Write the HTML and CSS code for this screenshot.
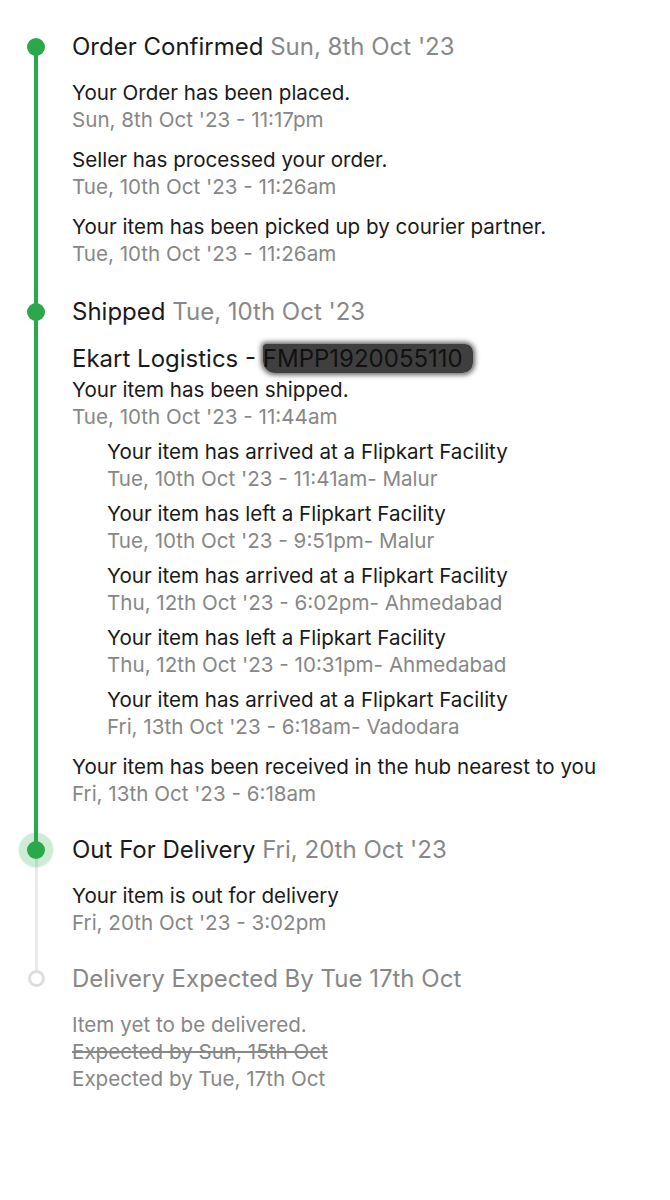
FILE: index.html
```html
<!DOCTYPE html>
<html lang="en">
<head>
<meta charset="UTF-8">
<meta name="viewport" content="width=device-width, initial-scale=1.0">
<title>Order Tracking</title>
<link rel="stylesheet" href="styles.css">
</head>
<body>
<div class="timeline">

<div class="step done">
<div class="rail"><span class="dot"></span></div>
<div class="content">
<div class="heading">Order Confirmed <span class="when">Sun, 8th Oct '23</span></div>
<div class="events">
<div class="event"><div class="msg">Your Order has been placed.</div><div class="time">Sun, 8th Oct '23 - 11:17pm</div></div>
<div class="event"><div class="msg">Seller has processed your order.</div><div class="time">Tue, 10th Oct '23 - 11:26am</div></div>
<div class="event"><div class="msg">Your item has been picked up by courier partner.</div><div class="time">Tue, 10th Oct '23 - 11:26am</div></div>
</div>
</div>
</div>

<div class="step done">
<div class="rail"><span class="dot"></span></div>
<div class="content">
<div class="heading">Shipped <span class="when">Tue, 10th Oct '23</span></div>
<div class="events">
<div class="event">
<div class="courier">Ekart Logistics - <span class="redacted">FMPP1920055110</span></div>
<div class="msg">Your item has been shipped.</div>
<div class="time">Tue, 10th Oct '23 - 11:44am</div>
<div class="sub-events">
<div class="event"><div class="msg">Your item has arrived at a Flipkart Facility</div><div class="time">Tue, 10th Oct '23 - 11:41am- Malur</div></div>
<div class="event"><div class="msg">Your item has left a Flipkart Facility</div><div class="time">Tue, 10th Oct '23 - 9:51pm- Malur</div></div>
<div class="event"><div class="msg">Your item has arrived at a Flipkart Facility</div><div class="time">Thu, 12th Oct '23 - 6:02pm- Ahmedabad</div></div>
<div class="event"><div class="msg">Your item has left a Flipkart Facility</div><div class="time">Thu, 12th Oct '23 - 10:31pm- Ahmedabad</div></div>
<div class="event"><div class="msg">Your item has arrived at a Flipkart Facility</div><div class="time">Fri, 13th Oct '23 - 6:18am- Vadodara</div></div>
</div>
</div>
<div class="event"><div class="msg">Your item has been received in the hub nearest to you</div><div class="time">Fri, 13th Oct '23 - 6:18am</div></div>
</div>
</div>
</div>

<div class="step current">
<div class="rail"><span class="dot"></span></div>
<div class="content">
<div class="heading">Out For Delivery <span class="when">Fri, 20th Oct '23</span></div>
<div class="events">
<div class="event"><div class="msg">Your item is out for delivery</div><div class="time">Fri, 20th Oct '23 - 3:02pm</div></div>
</div>
</div>
</div>

<div class="step pending">
<div class="rail"><span class="dot"></span></div>
<div class="content">
<div class="heading">Delivery Expected By Tue 17th Oct</div>
<div class="events">
<div class="event">
<div class="time">Item yet to be delivered.</div>
<div class="time struck">Expected by Sun, 15th Oct</div>
<div class="time">Expected by Tue, 17th Oct</div>
</div>
</div>
</div>
</div>

</div>
</body>
</html>
```

FILE: styles.css
```css
body { margin: 0; background: #ffffff; font-family: Inter, "Noto Sans", sans-serif; color: #1a1a1a; }
.timeline { padding-top: 31px; }

/* each step: rail column + text column, the rail line runs down to the next dot */
.step { position: relative; display: grid; grid-template-columns: 72px 1fr; padding-bottom: 29px; }
.step::before { content: ''; position: absolute; left: 34px; top: 16px; bottom: -16px; width: 4px; background: #2aa84a; }
.step.done + .step.done { padding-bottom: 27px; }
.step.current { padding-bottom: 27px; }
.step.current::before { left: 35px; width: 3px; background: #e9e9e9; }
.step.pending::before { display: none; }

.rail { position: relative; z-index: 1; display: flex; justify-content: center; padding-top: 7px; }
.dot { width: 18px; height: 18px; border-radius: 50%; background: #2aa84a; box-sizing: border-box; }
.current .dot { box-shadow: 0 0 0 8px rgba(42, 168, 74, 0.16), 0 0 0 9px rgba(42, 168, 74, 0.08); }
.pending .dot { background: #ffffff; border: 3px solid #dedede; width: 17px; height: 17px; }

.heading { font-size: 24px; line-height: 32px; }
.when { color: #888888; }
.pending .heading { color: #878787; }

.events { display: flex; flex-direction: column; gap: 13px; margin-top: 16px; }
.msg, .time { font-size: 20.6px; line-height: 27px; }
.time { color: #878787; }
.struck { text-decoration: line-through; }

.courier { font-size: 24px; line-height: 30px; margin-bottom: 2px; }
.redacted { background: #3f3f3f; color: #111; border-radius: 3px 8px 10px 12px; box-shadow: 0 0 5px 2px rgba(50, 50, 50, 0.75); padding: 0 10px 0 0; }

.sub-events { display: flex; flex-direction: column; gap: 8px; margin: 8px 0 0 35px; }
```
